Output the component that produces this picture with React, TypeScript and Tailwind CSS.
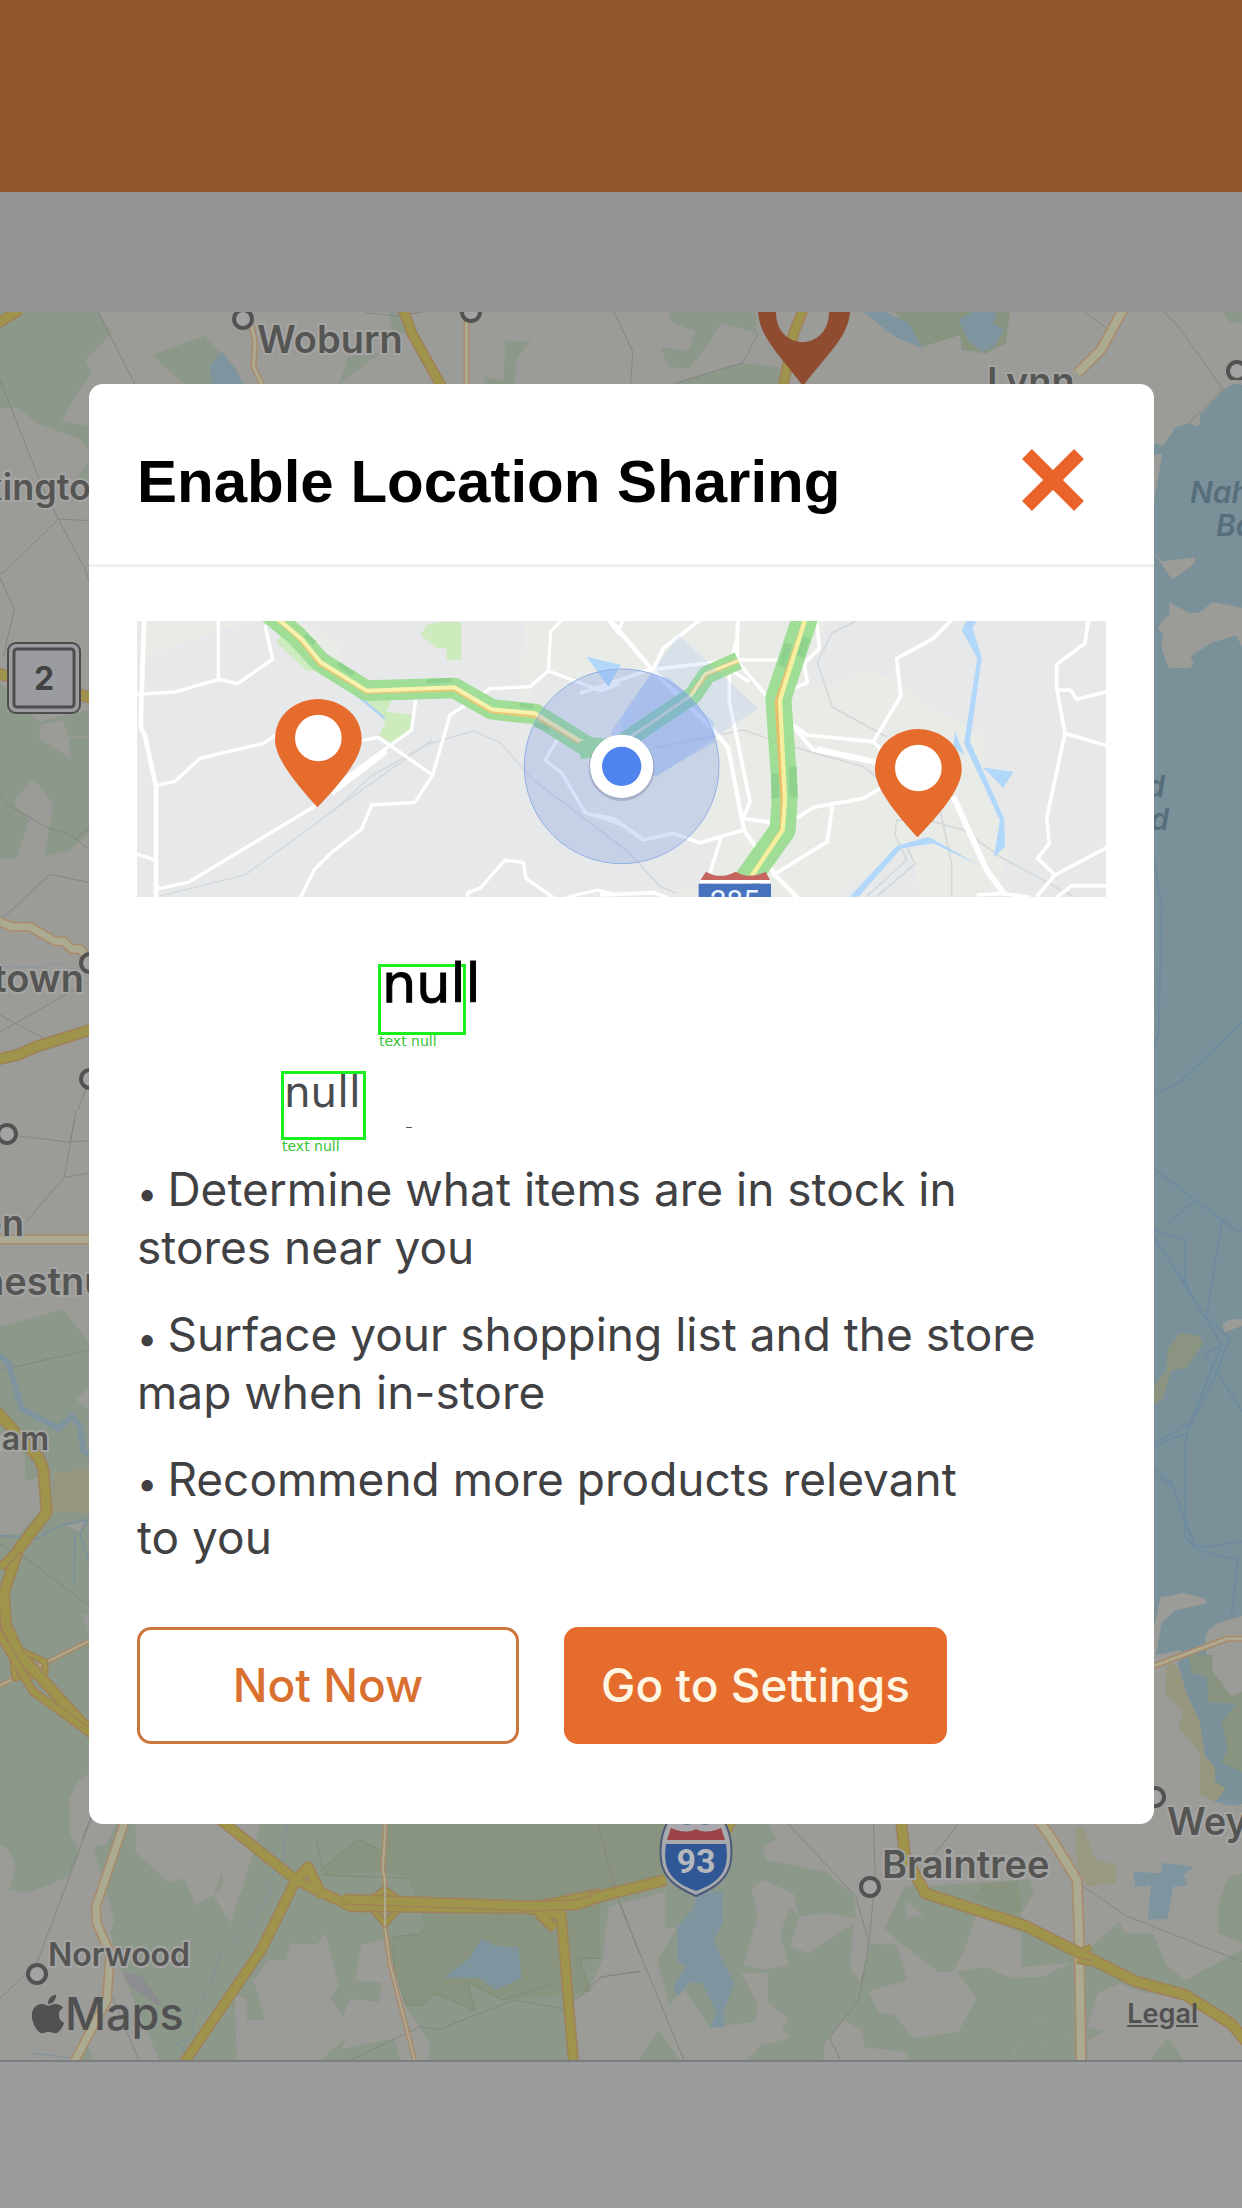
import React from "react";
import { FaApple } from "react-icons/fa";

const GREEN = "#8c988a";
const GREEN2 = "#88947f";
const WATER = "#7b919a";
const LAKE = "#7e95a0";
const LINE = "#858583";
const LAND = "#9b9b98";
const ORANGE = "#e56c2c";

type P = { d: string; fill?: string };

const Area = ({ d, fill = GREEN }: P) => <path d={d} fill={fill} />;

const Thin = ({ d, color = LINE, w = 1 }: { d: string; color?: string; w?: number }) => (
  <path d={d} fill="none" stroke={color} strokeWidth={w} vectorEffect="non-scaling-stroke" />
);

const Highway = ({ d, w = 9 }: { d: string; w?: number }) => (
  <g fill="none" strokeLinejoin="round">
    <path d={d} stroke="#a08158" strokeWidth={w + 3} vectorEffect="non-scaling-stroke" />
    <path d={d} stroke="#9f944c" strokeWidth={w} vectorEffect="non-scaling-stroke" />
  </g>
);

const Street = ({ d, w = 5 }: { d: string; w?: number }) => (
  <g fill="none" strokeLinejoin="round">
    <path d={d} stroke="#a98a6a" strokeWidth={w + 3} vectorEffect="non-scaling-stroke" />
    <path d={d} stroke="#adaa92" strokeWidth={w} vectorEffect="non-scaling-stroke" />
  </g>
);

const Town = ({ x, y }: { x: number; y: number }) => (
  <circle cx={x} cy={y} r="9" fill="#a3a3a2" stroke="#525252" strokeWidth="4" />
);

const Label = ({
  x,
  y,
  size = 38,
  end = false,
  children,
}: {
  x: number;
  y: number;
  size?: number;
  end?: boolean;
  children: string;
}) => (
  <text
    x={x}
    y={y}
    fontSize={size}
    textAnchor={end ? "end" : "start"}
    className="font-['Inter',sans-serif] font-semibold"
    fill="#555554"
    stroke="#a5a5a3"
    strokeWidth="4"
    paintOrder="stroke"
  >
    {children}
  </text>
);

const SeaLabel = ({ x, y, end = false, children }: { x: number; y: number; end?: boolean; children: string }) => (
  <text
    x={x}
    y={y}
    fontSize="30"
    textAnchor={end ? "end" : "start"}
    className="font-['Inter',sans-serif] font-semibold italic"
    fill="#566f7b"
  >
    {children}
  </text>
);

function AreaMap() {
  return (
    <svg
      className="absolute inset-0 h-full w-full"
      viewBox="0 312 1242 1748"
      preserveAspectRatio="xMidYMid slice"
      aria-hidden="true"
    >
      <rect x="0" y="312" width="1242" height="1748" fill={LAND} />

      {/* North */}
      <g transform="translate(0 160) scale(.792 .33333)">
        <Area d="M0 456H124L141 520L108 600L115 640L92 720H0Z" />
        <Area d="M192 585L258 527L298 628L310 690H240Z" />
        <Area d="M265 620L280 575L298 628L308 680H268Z" fill={LAKE} />
        <Area d="M440 590L480 580L428 672Z M490 456H515L520 520L495 515Z" />
        <Area d="M638 542L670 544L652 600L650 680H612V652L636 660Z" />
        <Area d="M845 456H955V520L910 488L892 560L870 625L845 622L834 562L870 572L878 515L848 485Z" />
        <Area d="M850 670L935 608L985 622V690H850Z" />
        <Area d="M1130 456H1275L1270 550L1245 580L1215 570L1212 525L1165 560Z" fill={GREEN2} />
        <Area d="M1090 456H1118L1148 490L1165 565L1130 530Z M1228 456H1258L1255 490L1268 510L1255 560L1240 575L1222 540L1210 480Z" fill={LAKE} />
        <Area d="M1545 456H1568V490L1552 485Z" />
        <Area d="M1530 720L1555 660L1568 690V720Z" fill={WATER} />
        <Thin d="M124 456L172 680M775 456L799 575L796 680M850 672L938 608L957 520M1370 456L1397 505M1470 456L1488 500L1545 690M462 458L500 468L534 456" />
        <Highway d="M-10 500L25 450M508 440L520 520L560 690" w={8} />
        <Street d="M318 500L322 545L320 620L334 690M589 456V690" w={3} />
        <Street d="M1420 440L1390 570L1360 640" w={8} />
        <Highway d="M1014 450L1002 520L988 690" w={8} />
      </g>
      <path
        d="M758 312C760 337 777 352 803 386C829 352 848 337 850 312H829C829 352 776 352 776 312Z"
        fill="#8f4c30"
      />
      <Town x={243} y={319} />
      <Town x={471} y={312} />
      <Town x={1237} y={371} />
      <Label x={257} y={353}>Woburn</Label>
      <Label x={987} y={395}>Lynn</Label>

      {/* West, upper */}
      <g transform="translate(0 380) scale(.33333 .48469)">
        <Area d="M0 0H250L185 85L267 95V145L235 120L120 92L45 55L0 60Z" />
        <Area d="M235 200L267 165V210Z M260 345L270 335V360Z" />
        <Area d="M0 625L115 705L270 680V935L205 972L133 982L160 875L100 822L40 870L88 910L48 988H0Z" />
        <Area d="M125 710L190 702L205 735H270V738L207 740L212 782L115 738Z" fill={LAND} />
        <Thin d="M0 0L118 205L175 287L255 390L270 420M0 400L20 392L175 287L270 290M0 408L43 474L10 570M0 855L20 875L150 927L185 930L225 946L270 925M225 946L270 970M10 1110L150 1020L270 1037M0 1345L270 1240M0 1310L130 1358M228 1508L212 1568M235 1505L270 1440" />
        <Thin d="M0 1210L120 1212L170 1202L210 1215L270 1210" color="#8897a0" />
        <Highway d="M-10 605L270 655" w={9} />
        <Street d="M-10 1115L35 1128H90L165 1158H190L215 1174H240L275 1200" w={7} />
        <Highway d="M-10 1402L55 1392L110 1375L275 1340" w={9} />
      </g>
      <g fill="#9b9c9f" stroke="#4d4d4e" strokeWidth="2">
        <rect x="8" y="643" width="72" height="70" rx="8" />
        <rect x="14" y="649" width="60" height="58" rx="3" strokeWidth="3" />
      </g>
      <text x="44" y="690" fontSize="32" textAnchor="middle" fill="#434344" className="font-['Inter',sans-serif] font-bold">
        2
      </text>
      <Town x={90} y={963} />
      <Town x={90} y={1079} />
      <Label x={113} y={500} size={36} end>Lexington</Label>
      <Label x={84} y={992} end>Watertown</Label>

      {/* West, lower */}
      <g transform="translate(0 1120) scale(.33333 .45918)">
        <Area d="M0 450L190 412L268 485V580L228 610L268 630V760L75 785V785H0Z" />
        <Area d="M0 805L270 758V1420L235 1440L208 1475L210 1568H0Z" />
        <Area d="M165 770L270 758V855H150Z" fill="#97967f" />
        <Area d="M0 692L75 730V782L0 800Z M0 800L115 785L122 850L60 900L0 905Z M200 885L258 872L245 898Z M245 1075L270 1080V1130Z" fill={LAND} />
        <Thin d="M0 545L270 500M0 925L90 960L270 1060M58 35L205 48L270 45M223 0L193 125L270 115M193 125L80 220M245 1568L275 1515" />
        <Thin d="M0 905L110 912L185 882L262 870L240 900L265 960M225 900L222 1010" color="#7d919b" w={2} />
        <path d="M0 512L25 530L65 628L175 672L215 645L240 665L250 720L270 732" fill="none" stroke={LAKE} strokeWidth="6" vectorEffect="non-scaling-stroke" />
        <Street d="M-10 260H280" w={7} />
        <Street d="M-10 1235L280 1130" w={2} />
        <Highway d="M35 1160L45 1215L135 1205V1180L50 1150" w={4} />
        <Highway d="M-10 635L115 735L130 760L140 855L55 935L12 1030L18 1100L60 1165L280 1340" w={9} />
        <Highway d="M55 935L0 975M-10 1110L100 1245L280 1340" w={6} />
      </g>
      <Town x={7} y={1134} />
      <Label x={24} y={1236} size={36} end>Newton</Label>
      <Label x={-47} y={1295}>Chestnut</Label>
      <Label x={49} y={1450} size={32} end>Needham</Label>

      {/* East, upper */}
      <rect x="1140" y="384" width="102" height="1420" fill={WATER} />
      <g transform="translate(1140 380) scale(.33333 .48469)">
        <Area d="M0 0H306V10L280 8L250 20L180 72V92L165 96L150 88L105 98L70 136L40 130Z" fill={LAND} />
        <Area d="M40 155L67 152L42 250Z M40 355L65 374L165 366V378L97 412Z M54 512L70 495L88 485V458L150 482L175 480L220 458L306 470V550L288 527L215 542L152 570L162 585L150 594H85L64 552L70 525Z" fill={LAND} />
        <Thin d="M150 86L248 20L230 0" />
        <Thin d="M40 985L65 1085L56 1350L40 1375M40 1475L120 1448L306 1325" color="#6f8ba0" w={2} />
      </g>
      <SeaLabel x={1190} y={503}>Nahant</SeaLabel>
      <SeaLabel x={1216} y={536}>Bay</SeaLabel>
      <SeaLabel x={1165} y={797} end>Broad</SeaLabel>
      <SeaLabel x={1169} y={830} end>Sound</SeaLabel>

      {/* East, lower */}
      <g transform="translate(1140 1120) scale(.33333 .45918)">
        <Area d="M40 580L80 545L82 500L118 465L180 470L188 488L140 540L95 545L66 610L40 622Z" fill="#8b9480" />
        <Area d="M247 445L270 434H306V448L255 462Z" fill={LAND} />
        <Area d="M40 1110L62 1040L130 1030L198 1042V1053L105 1068L65 1095L48 1165L120 1155L215 1480L306 1500V1568H0V1530H40Z" fill={LAND} />
        <Area d="M195 1130L205 1110L235 1095L306 1080V1270L215 1270Z" fill={LAND} />
        <Area d="M82 1180L115 1190L140 1250L180 1310L195 1385L225 1410V1440L258 1455L250 1490L180 1470V1380L115 1320L130 1290L75 1248Z" fill="#97967f" />
        <Area d="M145 1165H218V1200L275 1255L306 1245V1420L245 1400L262 1370L245 1310L290 1270L205 1268L200 1212L155 1205Z" fill={GREEN2} />
        <Area d="M218 1170V1195L275 1250L306 1235V1170Z" fill={LAND} />
        <Area d="M112 1180L138 1172L158 1208L200 1212L205 1268L288 1272L245 1310L262 1370L245 1400L255 1430L285 1450L295 1490L225 1485L258 1455L225 1440V1410L195 1385L180 1310L140 1250Z" fill={WATER} />
        <Thin
          d="M40 105L165 175L290 240H306M165 175L90 222M247 215L200 425M40 240L135 260V350L160 390M40 250L190 425L270 475L230 550L150 665L135 705V905L170 935L293 958L275 1075M45 260L130 350L245 490L150 660L40 705M40 712L145 680M195 508L250 490M195 508L306 635M40 755L95 790L145 890L165 925L200 930L306 918M40 768L100 800L150 905"
          color="#6f8ba0"
          w={2}
        />
        <Street d="M30 1192L260 1130H320" w={3} />
      </g>

      {/* South-west */}
      <g transform="translate(0 1800) scale(.40816 .33333)">
        <Area d="M0 0H170V100L195 155L168 230L70 278L22 270L38 200L20 145L0 135Z" />
        <Area d="M228 140L260 135L290 60H332V155L415 250L450 235L480 315L525 285L550 190L520 60H695L640 260L602 235L563 385L555 300L585 190L525 290L580 400L700 470L705 480L662 475L620 540L650 660H605V595L575 585L580 780H390L300 520L270 400L280 360Z" />
        <Area d="M520 60H695L635 265L602 232L563 385L555 300Z" fill={LAND} />
        <Area d="M640 60H1568V290L1490 320L1475 480L1445 570L1405 605L1420 780H1050L1052 725L990 610L950 415L885 435L870 540L935 548L930 605L857 598L840 650L810 595L830 555L798 400L775 435L712 430L700 480H650L560 590L480 780H440L560 385L602 235Z" />
        <Area d="M785 780L850 710L835 748L965 715L980 780Z M200 760L215 740L230 780H195Z" />
        <Area d="M950 60H1568V290L1490 320L1475 475L1420 480L1445 575L1230 600L1145 545L1165 632L1065 580L1035 615H995L965 500L950 410L1030 402L1045 375L1010 235L940 215Z M785 210L877 118L940 155V215L790 225Z" fill={GREEN2} />
        <Area d="M950 280L1010 235L1045 375L1030 402L950 410Z" />
        <Area d="M300 515L345 525L400 620L380 610L320 560Z" fill="#8b8d91" />
        <Area d="M1088 532L1150 475L1180 415L1215 438L1270 442L1278 535L1215 570L1175 534Z" fill={LAKE} />
        <Thin d="M225 50L90 490L0 595M275 590L340 780M860 780L1030 680L1075 688L1260 600L1385 627M1462 60L1500 245L1568 465M1405 605L1475 530L1568 515" />
        <Thin d="M705 60L690 190L640 255L668 262L612 390L540 455L520 540L490 610L470 670L478 710L432 730L450 745M75 780L85 760L180 775" color="#7e929a" w={1} />
        <Thin d="M775 120L790 205M785 210L877 118L940 155M790 225L1005 235L1045 375L1030 402L965 410M965 440V500L995 615H1035L1065 580L1165 632L1145 545L1230 600L1365 550M1480 475L1420 475L1445 575" color="#7f8c74" />
        <Street d="M307 60L235 320L237 370L270 460L262 600L180 790" w={7} />
        <Street d="M945 60L938 210L943 240V380L955 490L1018 790" w={2} />
        <Highway d="M905 302L943 268L980 302M915 330L943 372L975 330" w={4} />
        <Highway d="M530 50L725 240L860 320L1290 325L1580 255M725 240L640 450L450 790M1290 325L1375 345L1405 790M1320 340L1360 385M725 240L755 200L790 290" w={8} />
        <Highway d="M840 298L1300 318L1410 315L1590 245" w={8} />
        <path d="M943 240V378" fill="none" stroke="#adaa92" strokeWidth="2" vectorEffect="non-scaling-stroke" />
      </g>
      <Town x={37} y={1974} />
      <Label x={48} y={1966} size={32}>Norwood</Label>

      {/* South-east */}
      <g transform="translate(600 1800) scale(.40945 .33333)">
        <Area d="M0 60H410L430 120L395 140L405 180L550 215L620 285L625 355L550 340L487 350L462 230L485 235L470 280L400 240L370 265L385 350L350 495L405 510L460 495L440 400L465 320L485 350L465 440L510 460L620 370L610 500L635 545L660 430L725 435L750 540L655 575L680 640L720 645L765 715L875 695L920 595L862 515L825 515L735 430L695 385L740 270L780 320L870 325L865 400L888 455L862 515L920 595L875 695L765 715L745 755L645 742L640 690L595 660L550 730L545 780H360L395 735L465 715L445 685L460 655L410 605V520L345 518L385 610L380 665L270 682L200 560L170 620L140 480L190 380L160 385V275L20 320L5 480H0Z" />
        <Area d="M735 430L695 385L745 260L1050 240L1060 280L1025 345L1060 380L1180 460L1270 365L1280 400L1350 402L1385 500L1430 540L1568 450V700L1440 600L1320 575L1270 550L1215 580L1190 680L1275 710L1290 680L1450 660L1540 720V780H1010L1020 730L1105 735L1158 700L1030 635L985 585L1005 535L1080 530L1150 490L1030 500V400L920 340L888 455L860 515Z" />
        <Area d="M745 300L790 345L750 355Z M1420 600L1568 705V780H1425L1388 712L1345 780H1190V720L1290 660Z" fill={LAND} />
        <Area d="M0 60H270L160 240L0 310Z M940 250L1020 240L1030 330L1000 350L910 290Z" fill={GREEN2} />
        <Area d="M870 515L920 595L875 695L765 715L750 740V780H1005L1020 730L1105 735L1158 700L1030 635L985 585L1005 535L940 500Z" />
        <Area d="M95 780L143 690L195 780Z M1345 780L1388 712L1425 780Z M1535 230L1568 220V430L1510 400V310Z" />
        <Area d="M1162 80H1180L1210 180L1260 195L1258 250L1190 258L1165 200Z" fill="#999880" />
        <Area d="M240 275H300V365L278 425L328 550L300 640L305 682H268L285 640L250 550L220 545L190 588L178 560L210 500L190 485V380L225 330Z M1302 215L1370 220L1375 188L1452 200L1425 225L1435 255L1400 260L1385 358H1338L1345 255L1308 262Z M1495 0H1560V18L1530 15Z" fill={LAKE} />
        <Thin d="M0 100L50 320L205 780M0 532L95 513M460 72L625 290L657 430L632 600L560 712L588 780M668 60L672 230L657 430M875 72L815 165M1175 255L1285 347L1568 485" />
        <Street d="M1070 60L1100 110L1165 240L1170 400L1175 790" w={8} />
        <Highway d="M320 60L300 110M-20 295L160 240M735 60L745 170L795 280L1040 378L1310 545L1430 585L1540 670L1590 740" w={9} />
        <Highway d="M1165 480L1200 490M1180 450L1200 442" w={4} />
      </g>
      <g>
        <path
          d="M671 1816C680 1824 688 1826 696 1821C704 1826 712 1824 721 1816C729 1828 733 1842 731 1860C729 1880 712 1889 696 1896C680 1889 663 1880 661 1860C659 1842 663 1828 671 1816Z"
          fill="#a7a9ad"
          stroke="#4b5b79"
          strokeWidth="2"
        />
        <path d="M671 1828C680 1832 688 1833 696 1829C704 1833 712 1832 721 1828L725 1840H667Z" fill="#9b4347" />
        <path d="M666 1844H726C730 1871 720 1882 696 1891C672 1882 662 1871 666 1844Z" fill="#2f5695" />
        <text x="696" y="1873" fontSize="34" textAnchor="middle" fill="#b4b8bd" className="font-['Roboto',sans-serif] font-bold">
          93
        </text>
      </g>
      <Town x={870} y={1887} />
      <Town x={1155} y={1797} />
      <Label x={882} y={1878}>Braintree</Label>
      <Label x={1167} y={1835}>Weymouth</Label>
    </svg>
  );
}

function Pin({ x, y }: { x: number; y: number }) {
  return (
    <g transform={`translate(${x} ${y})`}>
      <path
        d="M0 0C-58 0 -129 40 -129 122C-129 180 -60 260 -2 325C60 260 131 180 131 122C131 40 58 0 0 0Z"
        fill={ORANGE}
      />
      <circle cx="1" cy="117" r="70" fill="#fff" />
    </g>
  );
}

function PreviewMap() {
  return (
    <svg
      className="block h-[276px] w-full"
      viewBox="137 621 969 276"
      preserveAspectRatio="xMidYMid slice"
      role="img"
      aria-label="Map with your location and nearby stores"
    >
      <rect x="137" y="621" width="969" height="276" fill="#e6e8ea" />
      <g transform="translate(600 600) scale(.33333)">
        <path
          d="M-150 60H680L600 270L700 250L800 215L880 235L1000 330L1060 355L1150 400V560L1230 760L1180 890H960L930 740L700 890H-20L-30 870L330 870L360 710L130 720L-50 650L100 480V200L-160 210Z"
          fill="#e9ebe6"
        />
      </g>
      <g transform="translate(120 600) scale(.33333)" fill="none" strokeLinejoin="round">
        <path d="M75 60H430L300 90L75 170Z M520 60L600 90L665 140V230L560 150Z M1210 60H1500V260L1280 220L1200 330Z" fill="#e9ebe6" />
        <path d="M480 105L560 150L600 212H560L472 130Z M902 105L920 75L960 66H1024V180H980V145H950Z M735 298L815 300L800 335L875 345L870 390L812 430L778 405L797 365Z" fill="#cdebbd" />
        <path d="M710 285L795 355" stroke="#abd3fa" strokeWidth="7" />
        <g stroke="#d7dadc" strokeWidth="5">
          <path d="M120 888L375 825L650 625L750 530L930 430L1060 393L1140 428L1240 540L1400 660L1500 740" />
          <path d="M640 630L860 475L935 420" />
        </g>
        <g stroke="#fff" strokeWidth="10">
          <path d="M72 60L62 380L75 408L108 560V895" strokeWidth="14" />
          <path d="M51 283L165 276L295 238L353 251L458 178L435 75M295 60V238M112 556L165 544L240 475L430 430L475 400M725 422L775 412L938 525L885 607L755 615L725 687L635 757L583 808L542 892M888 290L875 390L812 435L635 565M115 866L205 847L595 612M51 762L105 780M938 525L990 345L1060 300L1110 266L1230 260L1285 213L1292 95L1325 60M1285 213L1442 272L1500 250M1315 415L1275 480L1325 518L1395 637L1500 672M1040 890L1045 877L1080 865L1155 780L1210 788L1218 835L1300 893M1340 892L1432 870L1490 885M1465 60L1500 105" />
          <path d="M635 580L800 455" strokeWidth="14" />
        </g>
        <path d="M445 38L530 108L600 185L740 272L1003 264L1115 328L1245 342L1405 442L1465 448" stroke="#a0de98" strokeWidth="62" />
        <path d="M555 105L585 130M655 192L700 222M920 244L995 240M1200 314L1240 320M1245 375L1290 386" stroke="#8fd28e" strokeWidth="14" />
        <path d="M460 45L540 115L600 190L740 274L1003 266L1115 332L1245 346L1405 440L1450 455" stroke="#e9c877" strokeWidth="16" />
        <path d="M460 45L545 117L602 186L740 272L1003 262L1115 328L1245 340L1405 438" stroke="#f8f2af" strokeWidth="12" />
      </g>
      <g transform="translate(600 600) scale(.33333)" fill="none" strokeLinejoin="round">
        <g stroke="#d5d8da" strokeWidth="5">
          <path d="M770 62L695 100L652 188L697 322L860 410M160 445L430 390L560 435L790 500L840 540M0 690L90 760L180 860L230 880M885 705L890 660L1000 665L1090 690L1200 770L1420 890M800 890L920 780L885 705M1020 630L1055 790V890M920 740L945 792L830 890" />
        </g>
        <g stroke="#fff" strokeWidth="11">
          <path d="M30 60L155 208L350 400L385 445L432 690L530 830L595 895" strokeWidth="13" />
          <path d="M70 60L55 90M300 60L190 145L160 208L400 180H540M415 60L412 110L388 210V305L450 605L430 655L530 670M412 60V185L510 300L640 450L830 490M400 215L448 246M580 375L620 405L820 425L902 288L890 175L1000 115L1055 60M820 425L850 455M650 60L658 145L612 190L622 248L580 265M590 655L640 622L790 595L850 560M697 620L682 725L515 828M-20 645L40 655L130 720L220 700L300 728L432 690M362 715L330 820M-60 280L155 208M1465 60L1455 130L1370 193V265L1395 400L1340 655L1348 730L1313 775L1365 825L1310 890M1370 270H1412L1430 298L1520 275M1395 400L1525 438M1525 740L1365 825M1525 857H1415L1370 892M1130 885L1205 880L1290 892M0 885L160 878L200 892" />
          <path d="M1060 590L1160 810L1215 885" strokeWidth="18" />
          <path d="M650 445L830 485" strokeWidth="14" />
        </g>
        <g fill="#b1d7fb">
          <path d="M1100 60H1130L1118 85L1145 175L1110 425L1212 655L1215 740L1182 770L1200 660L1092 430L1132 175L1086 92Z" />
          <path d="M1150 503L1240 515L1210 563Z M1065 395L1060 440L1093 465Z M750 890L890 738L985 710L1140 797L1000 730L905 745L775 890Z M-40 170L63 195L25 260Z" />
        </g>
        <path d="M618 45L535 295L555 580L548 690L440 840" stroke="#a0de98" strokeWidth="78" />
        <path d="M566 130L545 200M620 112L600 170M578 500L580 590M525 520L526 595" stroke="#8fd28e" strokeWidth="24" />
        <path d="M615 60L530 305L548 600L545 690L455 828" stroke="#e8bd6c" strokeWidth="12" />
        <path d="M615 60L540 300L555 600L548 690L455 828" stroke="#f5f0a0" strokeWidth="13" />
        <path d="M-60 450L50 440L130 385L280 285L320 225L415 182" stroke="#a0de98" strokeWidth="54" />
        <path d="M275 280L320 222L415 182" stroke="#e9c877" strokeWidth="14" />
        <path d="M60 430L130 385L275 285L315 222L415 182" stroke="#f3efb5" strokeWidth="9" />
        <path d="M65 350L235 105L475 325L170 530L65 500Z" fill="#6ba0ff" fillOpacity=".13" />
        <path d="M30 400L150 225L210 235L340 365L345 425L165 530Z" fill="#6ba0ff" fillOpacity=".25" />
        <circle cx="65" cy="499" r="292" fill="#6e93e6" fillOpacity=".27" stroke="#90afe3" strokeWidth="3" />
        <circle cx="65" cy="504" r="99" fill="#64748b" fillOpacity=".35" />
        <circle cx="65" cy="499" r="95" fill="#fff" />
        <circle cx="65" cy="499" r="59" fill="#4f83ee" />
        <path d="M318 815Q360 840 407 815Q450 840 497 815L511 842H300Z" fill="#c6655f" />
        <path d="M300 840H511V850H300Z" fill="#fff" />
        <path d="M296 851H513V900H296Z" fill="#4672bf" />
        <text x="404" y="932" fontSize="88" textAnchor="middle" fill="#edf3fd" className="font-['Roboto',sans-serif]">
          285
        </text>
        <Pin x={954} y={387} />
      </g>
      <g transform="translate(120 600) scale(.33333)">
        <Pin x={594} y={297} />
      </g>
    </svg>
  );
}

const BENEFITS = [
  "Determine what items are in stock in stores near you",
  "Surface your shopping list and the store map when in-store",
  "Recommend more products relevant to\u00a0you",
];

export default function App() {
  return (
    <div className="relative flex min-h-screen flex-col bg-[#949596] font-['Inter',sans-serif]">
      <header className="h-48 bg-[#92562e]" />
      <div className="h-[120px] bg-[#949596]" />
      <main className="relative flex flex-1 flex-col justify-end overflow-hidden">
        <AreaMap />
        <div className="relative flex items-center justify-between pr-11 pb-4 pl-[31px] text-[#515151]">
          <span className="flex items-center text-[45px] leading-[60px] font-medium">
            <FaApple className="h-11 w-[34px]" aria-hidden="true" />
            Maps
          </span>
          <a href="#legal" className="text-[27px] font-semibold underline">
            Legal
          </a>
        </div>
      </main>
      <footer className="h-[148px] border-t-2 border-[#7c7d7e] bg-[#9b9c9e]" />

      <div className="absolute inset-0 flex items-center pr-[88px] pl-[89px]">
        <section
          role="dialog"
          aria-labelledby="dialog-title"
          className="w-full rounded-[14px] bg-white pb-20"
        >
          <div className="flex h-[183px] items-center justify-between border-b-3 border-[#efefef] pt-3 pr-[70px] pl-12">
            <h1
              id="dialog-title"
              className="pt-1 font-['Liberation_Sans',sans-serif] text-[60px] font-bold text-black"
            >
              Enable Location Sharing
            </h1>
            <button type="button" aria-label="Close" className="size-[62px]">
              <svg viewBox="0 0 62 62" className="size-full">
                <path d="M5 5L57 57M57 5L5 57" stroke="#e9632a" strokeWidth="14" />
              </svg>
            </button>
          </div>

          <div className="px-12 pt-[54px]">
            <PreviewMap />

            <div className="pt-[67px] font-['DejaVu_Sans',sans-serif] whitespace-nowrap">
              <div className="ml-[241px] w-[88px]">
                <div className="h-[71px] border-3 border-[#1aef20] pl-px text-[54px] leading-[33px] text-black [-webkit-text-stroke:1px_#000]">
                  null
                </div>
                <div className="pl-px text-[14px] leading-3 text-[#35c435]">text null</div>
              </div>
              <div className="mt-6 ml-36 flex items-end gap-10">
                <div className="w-[85px]">
                  <div className="h-[69px] border-3 border-[#1aef20] text-[42px] leading-[38px] text-[#4a4b4e]">
                    null
                  </div>
                  <div className="pl-px text-[14px] leading-3 text-[#35c435]">text null</div>
                </div>
                <div className="mb-6 h-px w-1.5 bg-[#555]" />
              </div>
            </div>

            <ul className="mt-2 flex flex-col gap-[29px] pr-12 text-[46px] leading-[58px] text-[#414144]">
              {BENEFITS.map((b) => (
                <li key={b}>
                  <span className="text-[36px] leading-none">{"•\u00a0"}</span>
                  {b}
                </li>
              ))}
            </ul>

            <div className="mt-[61px] flex gap-[45px]">
              <button
                type="button"
                className="h-[117px] w-[382px] rounded-[14px] border-3 border-[#cb763f] text-[46px] font-medium text-[#d9702f]"
              >
                Not Now
              </button>
              <button
                type="button"
                className="h-[117px] w-[383px] rounded-[14px] bg-[#e56c2c] text-[46px] font-medium text-[#fff6e4]"
              >
                Go to Settings
              </button>
            </div>
          </div>
        </section>
      </div>
    </div>
  );
}
